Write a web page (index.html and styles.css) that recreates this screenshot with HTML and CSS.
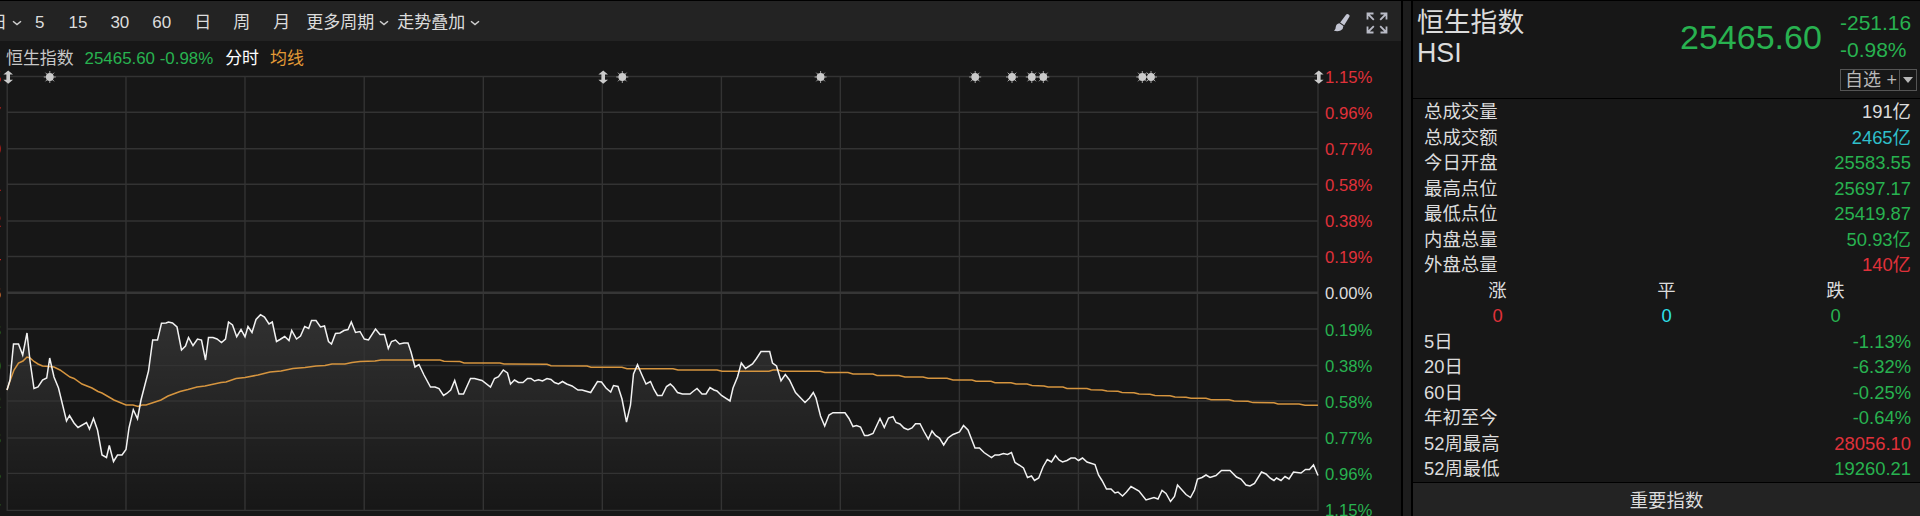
FILE: index.html
```html
<!doctype html>
<html lang="zh-CN">
<head>
  <meta charset="utf-8">
  <title>恒生指数 HSI</title>
  <link rel="stylesheet" href="styles.css">
</head>
<body>

<div class="app">

  <div class="main">
    <div class="toolbar">
      <span class="tab tab-cut">日</span>
      <svg class="chevron c1" viewBox="0 0 10 6"><path d="M1 1.2L5 4.6L9 1.2"/></svg>
      <span class="tab t5">5</span>
      <span class="tab t15">15</span>
      <span class="tab t30">30</span>
      <span class="tab t60">60</span>
      <span class="tab day">日</span>
      <span class="tab week">周</span>
      <span class="tab month">月</span>
      <span class="tab more">更多周期</span>
      <svg class="chevron c2" viewBox="0 0 10 6"><path d="M1 1.2L5 4.6L9 1.2"/></svg>
      <span class="tab overlay">走势叠加</span>
      <svg class="chevron c3" viewBox="0 0 10 6"><path d="M1 1.2L5 4.6L9 1.2"/></svg>
      <div class="tools">
        <svg class="brush" viewBox="0 0 18 20">
          <path d="M13.2 1.6Q14 .6 15.2 1.2L16.2 2Q17 2.8 16.4 3.8L11.2 12.2L7.2 9.4Z"/>
          <path d="M6.4 10.2L10.4 13.1Q10.4 16.2 7.6 17.6Q4.6 18.8 1 17.8Q2.8 16.6 2.7 14.2Q3 10.6 6.4 10.2Z"/>
        </svg>
        <svg class="expand" viewBox="0 0 22 22">
          <path d="M1.5 7.5V1.5H7.5M1.5 1.5L7.8 7.8M14.5 1.5H20.5V7.5M20.5 1.5L14.2 7.8M1.5 14.5V20.5H7.5M1.5 20.5L7.8 14.2M14.5 20.5H20.5V14.5M20.5 20.5L14.2 14.2"/>
        </svg>
      </div>
    </div>

    <div class="legend">
      <span class="legend-name">恒生指数</span>
      <span class="legend-price green">25465.60 -0.98%</span>
      <span class="legend-time">分时</span>
      <span class="legend-avg">均线</span>
    </div>

    <div class="chart">
      <div class="axis axis-price">
        <span class="red">26013.65</span>
        <span class="red">25964.17</span>
        <span class="red">25914.69</span>
        <span class="red">25865.21</span>
        <span class="red">25815.72</span>
        <span class="red">25766.24</span>
        <span>25716.76</span>
        <span class="green">25667.28</span>
        <span class="green">25617.80</span>
        <span class="green">25568.32</span>
        <span class="green">25518.83</span>
        <span class="green">25469.35</span>
        <span class="green">25419.87</span>
      </div>

      <svg class="plot" viewBox="1 69 1323 447">
        <defs>
          <linearGradient id="fade" gradientUnits="userSpaceOnUse" x1="0" y1="310" x2="0" y2="510">
            <stop offset="0" stop-color="#fff" stop-opacity=".115"/>
            <stop offset="1" stop-color="#fff" stop-opacity="0"/>
          </linearGradient>
          <g id="sun">
            <circle r="3.9"/>
            <path d="M0-6V6M-6 0H6M-4.3-4.3L4.3 4.3M-4.3 4.3L4.3-4.3"/>
          </g>
          <path id="updown" d="M0-6.6L4.8-2.6H1.8V2.6H4.8L0 6.6L-4.8 2.6H-1.8V-2.6H-4.8Z"/>
        </defs>

        <path class="area" id="area"/>
        <path class="grid" d="M7 76.5H1318M7 112.3H1318M7 148.8H1318M7 184.3H1318M7 221H1318M7 256.5H1318M7 329H1318M7 365.5H1318M7 401H1318M7 438H1318M7 473.4H1318M7 510.4H1318"/>
        <path class="grid" d="M7.2 76V511M126 76V511M245 76V511M364.2 76V511M483.3 76V511M602.3 76V511M721.4 76V511M840.3 76V511M959.4 76V511M1078.4 76V511M1197.4 76V511M1318 76V511"/>
        <path class="zero" d="M7 292.8H1318"/>
        <polyline class="avg" id="avg"/>
        <polyline class="price" id="price"/>

        <g class="marks">
          <use href="#updown" x="8.2" y="77.2"/>
          <use href="#updown" x="603.2" y="77.2"/>
          <use href="#updown" x="1318.8" y="77.2"/>
          <use href="#sun" x="49.8" y="77"/>
          <use href="#sun" x="622.3" y="77"/>
          <use href="#sun" x="820.6" y="77"/>
          <use href="#sun" x="975.2" y="77"/>
          <use href="#sun" x="1012" y="77"/>
          <use href="#sun" x="1031.8" y="77"/>
          <use href="#sun" x="1043.3" y="77"/>
          <use href="#sun" x="1142.3" y="77"/>
          <use href="#sun" x="1151" y="77"/>
        </g>
      </svg>

      <div class="axis axis-percent">
        <span class="red">1.15%</span>
        <span class="red">0.96%</span>
        <span class="red">0.77%</span>
        <span class="red">0.58%</span>
        <span class="red">0.38%</span>
        <span class="red">0.19%</span>
        <span>0.00%</span>
        <span class="green">0.19%</span>
        <span class="green">0.38%</span>
        <span class="green">0.58%</span>
        <span class="green">0.77%</span>
        <span class="green">0.96%</span>
        <span class="green">1.15%</span>
      </div>
    </div>
  </div>

  <div class="gutter"></div>

  <div class="side">
    <div class="quote">
      <div class="quote-name">
        <div>恒生指数</div>
        <div>HSI</div>
      </div>
      <div class="quote-price green">25465.60</div>
      <div class="quote-right">
        <div class="quote-change green">-251.16</div>
        <div class="quote-change green">-0.98%</div>
        <div class="watch">
          <span class="watch-label">自选 <i>+</i></span>
          <span class="watch-arrow"><svg viewBox="0 0 10 6"><path d="M0 0H10L5 6Z"/></svg></span>
        </div>
      </div>
    </div>

    <div class="stats">
      <div class="row"><span>总成交量</span><span>191亿</span></div>
      <div class="row"><span>总成交额</span><span class="teal">2465亿</span></div>
      <div class="row"><span>今日开盘</span><span class="green">25583.55</span></div>
      <div class="row"><span>最高点位</span><span class="green">25697.17</span></div>
      <div class="row"><span>最低点位</span><span class="green">25419.87</span></div>
      <div class="row"><span>内盘总量</span><span class="green">50.93亿</span></div>
      <div class="row"><span>外盘总量</span><span class="red">140亿</span></div>
      <div class="breadth">
        <span>涨</span><span>平</span><span>跌</span>
        <span class="red">0</span><span class="cyan">0</span><span class="green">0</span>
      </div>
      <div class="row"><span>5日</span><span class="green">-1.13%</span></div>
      <div class="row"><span>20日</span><span class="green">-6.32%</span></div>
      <div class="row"><span>60日</span><span class="green">-0.25%</span></div>
      <div class="row"><span>年初至今</span><span class="green">-0.64%</span></div>
      <div class="row"><span>52周最高</span><span class="red">28056.10</span></div>
      <div class="row"><span>52周最低</span><span class="green">19260.21</span></div>
    </div>

    <div class="side-footer">重要指数</div>
  </div>

</div>

<script>
var price = '7,390 10,380 13.5,344 18.5,344 22.7,355 27,333 30,361 34,388.5 38,387 42.5,380 46.7,378 49.7,358 54,377 58.5,388 66.5,421 69.5,415.5 74,423 78,427.5 86.5,422.5 89.5,429 93.5,418.5 97.5,430 102,455 106.5,457.5 109.3,445.5 113.5,461.5 117.5,455 122,455 126,449.5 129,428 133.3,409.7 137.5,418.7 141,400 148.5,371 152.7,340 157.5,340 161.5,323.3 166,323 168.5,322 172.5,323 177,327 181.5,350 185.5,346 188.5,337.5 193,345.5 197.5,339 201.5,340 205.5,360 208.5,337.5 213,337.5 217,339 221.5,342.5 225.5,339 228.5,322 232.5,325 236.7,336.7 241,329.5 245,336.7 248,326.5 252,332.5 256,319.5 260.5,314.7 264.5,317 269,324 272.3,322 ' +
  '276.5,341.5 280,339.5 284.7,336.5 289,340.5 291.7,330.5 296.5,339 300.5,336 304.7,326.5 308.7,328.5 311.5,320.5 316,320.5 320.5,327 324.5,326 328.5,341.5 331.5,344 335.5,333.5 340,333 344,330.5 348,329.5 351.3,322 355.5,332.5 360,331.5 364.3,339 368.5,340 375.5,329 380,334.5 384.5,334.5 388.3,348.5 391.5,341.5 395.5,340 399.5,344 404,343 408,343 411,352 415,367 419,364.5 424,375 430.5,387 435,387 439,388.5 443.5,395.5 446.7,393.5 450.7,390 454.7,380.5 459,394 463.5,394 470.5,378.5 474.5,378.5 482,380.5 490.5,387 494.5,378.5 498.5,376.7 503.3,370 507.5,373 510.5,384 514.5,380 518.5,382.5 523,382.5 527.5,378.5 531,378.5 534.5,381 538.5,379.7 542.5,381 ' +
  '547,378.5 551,379.5 554.5,382.5 558.5,384 562.5,381.5 566.7,384 572,386 578,390 582,390 590.7,392.5 597.5,381.5 601.5,382 606,388 610.7,392 613.5,385.5 618,386.5 622,399 626.5,422 630.5,405 633.5,374 637.5,364.7 641.5,374 646,384 650.5,381.5 654,389.5 657.5,395.5 662,395.5 666.5,386.5 670.3,384 673.5,387 677.5,392.5 682.5,394 690,394 693,391.5 697,388.5 702,394 706,394 710,387.5 714,390 717,391 721.5,395.5 730,401 733,388 737.5,377 741.3,363 745.5,368.5 752.5,364 756.5,358.5 761,351.5 769.7,351.5 772.5,363 776.5,366 781,380.7 785.3,374.5 789.5,380 795.5,392.5 805,402.5 809.5,398 813.3,392.5 ' +
  '816,398 820.5,416 824.7,426 829,415 833,412.7 845,412.7 849,418.5 853,426.5 856.5,425.5 860.5,427 864.5,435.5 868,435.5 873,433.5 880,418.5 884.3,427.5 888.5,418 893,416.7 896,422.5 900,424 904,428 908,429.7 912,428 915.5,423.7 920,423.7 924,431.5 928.3,439 932,431 935.5,435.5 939.5,438 943.7,445 948,438 953,434.5 959.5,432 963.5,425.5 968,430 975,448 979.5,448 984,452.5 991.5,457.5 995,455 999,455 1003.5,453.5 1007.5,454.5 1011.5,452.5 1015,462.5 1019,465 1023.5,468 1027.5,477.5 1031.5,476 1034.5,480.5 1038.7,478 1043,467 1047.3,459.5 1051.5,462 1055.5,455.5 1059,460 1062.5,462 1067,460.5 1071,458 1075,458 1078.5,460.5 1082.5,458 ' +
  '1087,462 1095,464.5 1098.5,475 1102,480.5 1106.5,489 1111,489 1115,493 1118,492 1122.5,496 1126.5,492 1131,486.5 1139,491 1146,500 1154,497.5 1158,499 1162,490.5 1166,493.5 1170.5,501.5 1174.5,496.5 1177.5,485 1182,490 1186,494.5 1190.5,497.5 1194.5,490 1197.5,479 1202,477.5 1206,475 1210,477.5 1216,475.5 1221.5,470.5 1230,470.5 1236.5,477 1241,479 1246,485 1250,486 1254.5,483.5 1261.5,472 1266,474 1270,478 1274,480.5 1276.5,478 1281,480.5 1285,476.5 1289,479 1293.5,472 1301,473 1305.5,469.5 1309.5,469.5 1313.5,465 1318,475.5';

var avg = '7,390 10,381 14,370 18.5,363 23,361 27,357 30,358 34,361.5 38,364 42.5,366 49,366.5 54,367 60,370 70,377 74,378.5 82,384 92,388 98,391.5 102,393 114,400 126,405 133,405 138,406.5 142,405 146,405 152,403 161,400 168,396 180,391.5 188,389.5 197,387 205,386 221,382.5 226,382 236,378.5 245,377.5 258,375 270,372 281,371 293,368.5 305,367.5 316,366 325,365.5 332,364 345,364 352,362.5 360,361.5 375,361 381,360 440,360 444,361.3 460,361.5 464,363 500,363 504,364 547,364.3 551,365.7 587,366 591,367.3 622,367.3 627,368.7 673,368.7 678,370 717,370 722,371.3 769,371.3 773,370 778,370 782,371.3 820,371.3 ' +
  '825,372.5 848,372.5 853,374 873,374 877,375.5 899,375.5 905,377 923,377 928,378.3 947,378.3 953,380 972,380 976,381.3 991,381.3 995,382.7 1011,382.7 1016,384 1027,384 1032,385.5 1044,386 1048,387 1063,387 1067,388.5 1087,388.5 1091,389.7 1102,390 1107,391 1118,391.3 1122,392.5 1134,392.7 1139,394 1150,394.3 1155,395.5 1170,395.7 1175,397 1186,397.3 1191,398.3 1206,398.3 1211,399.7 1229,399.7 1234,401 1248,401.2 1253,402.6 1274,402.7 1278,404 1299,404 1305,405.3 1318,405.3';

document.getElementById('price').setAttribute('points', price);
document.getElementById('avg').setAttribute('points', avg);
// close the price line down to the bottom of the grid
document.getElementById('area').setAttribute('d', 'M7,510 L' + price + ' L1318,510 Z');
</script>

</body>
</html>
```

FILE: styles.css
```css
* {
  box-sizing: border-box;
}

body {
  margin: 0;
  background: #000;
  color: #dcdcdc;
  font-family: "Liberation Sans", "Noto Sans CJK SC", sans-serif;
  overflow: hidden;
}

.app {
  display: flex;
  width: 1920px;
  height: 516px;
  padding-top: 1px;
  overflow: hidden;
}

.green { color: #28b250; }
.red { color: #e0313a; }
.cyan { color: #2ee0ea; }
.teal { color: #2fbfca; }

/* left: toolbar + chart */

.main {
  width: 1401px;
  background: #171717;
  overflow: hidden;
}

.toolbar {
  display: flex;
  align-items: center;
  height: 40px;
  background: #232323;
  font-size: 17px;
  line-height: 38px;
  white-space: nowrap;
}

.chevron {
  width: 10px;
  height: 6px;
  flex: none;
  margin-top: 4px;
  fill: none;
  stroke: #cfcfcf;
  stroke-width: 1.5;
}

.tab { flex: none; margin-top: 4px; }
.tab-cut { margin-left: -10px; }
.c1 { margin-left: 5px; }
.t5 { margin-left: 13px; }
.t15 { margin-left: 24px; }
.t30 { margin-left: 23px; }
.t60 { margin-left: 23px; }
.day { margin-left: 23px; }
.week { margin-left: 22px; }
.month { margin-left: 23px; }
.more { margin-left: 16px; }
.c2 { margin-left: 5px; }
.overlay { margin-left: 8px; }
.c3 { margin-left: 5px; }

.tools {
  display: flex;
  align-items: center;
  gap: 15px;
  margin-left: auto;
  padding: 4px 13px 0 0;
}

.brush {
  width: 18px;
  height: 20px;
  fill: #c3c5d2;
}

.expand {
  width: 22px;
  height: 22px;
  fill: none;
  stroke: #b9bbc6;
  stroke-width: 1.8;
}

.legend {
  display: flex;
  height: 28px;
  padding-left: 6px;
  font-size: 16.9px;
  line-height: 35px;
  white-space: nowrap;
}

.legend-name { color: #c8c8c8; }
.legend-price { margin-left: 11px; }
.legend-time { margin-left: 12px; color: #fff; }
.legend-avg { margin-left: 11px; color: #e39a36; }

.chart {
  display: flex;
  height: 447px;
}

.axis {
  display: flex;
  flex-direction: column;
  justify-content: space-between;
  height: 450px;
  font-size: 16.7px;
  line-height: 17px;
}

.axis-price {
  width: 1px;
  align-items: flex-end;
  overflow: hidden;
}

.plot {
  flex: none;
  width: 1323px;
  height: 447px;
}

.axis-percent {
  padding-left: 1px;
}

.area { fill: url(#fade); }
.grid { fill: none; stroke: #333; stroke-width: 1.4; }
.zero { stroke: #363636; stroke-width: 2.4; }
.price { fill: none; stroke: #f2f2f2; stroke-width: 1.5; }
.avg { fill: none; stroke: #d6953f; stroke-width: 1.5; }

.marks {
  fill: #cacaca;
  stroke: #cacaca;
  stroke-width: .8;
}

#sun circle,
#updown {
  stroke: none;
}

.gutter {
  width: 12px;
  background: #1d1d1d;
  border: solid #000;
  border-width: 0 2px;
}

/* right: quote panel */

.side {
  width: 507px;
  background: #171717;
}

.quote {
  display: flex;
  height: 98px;
  border-bottom: 1px solid #000;
}

.quote-name {
  width: 267px;
  padding: 7px 0 0 4px;
  font-size: 26.8px;
  line-height: 30px;
}

.quote-price {
  width: 160px;
  padding-top: 16px;
  font-size: 34px;
  line-height: 40px;
}

.quote-right {
  width: 77px;
  padding-top: 8px;
}

.quote-change {
  font-size: 21px;
  line-height: 27px;
}

.watch {
  display: flex;
  height: 22px;
  margin-top: 6px;
  border: 1px solid #555;
  color: #b8b8b8;
  font-size: 18px;
  line-height: 20px;
  white-space: nowrap;
}

.watch-label {
  display: flex;
  align-items: center;
  justify-content: space-between;
  flex: 1;
  padding: 0 2px 0 4px;
}

.watch-label i {
  font-style: normal;
}

.watch-arrow {
  display: flex;
  align-items: center;
  justify-content: center;
  width: 17px;
  border-left: 1px solid #555;
}

.watch-arrow svg {
  width: 10px;
  height: 6px;
  fill: #b8b8b8;
}

.stats {
  height: 384px;
  border-bottom: 1px solid #000;
  font-size: 18.4px;
  line-height: 26px;
}

.row {
  display: flex;
  justify-content: space-between;
  height: 25.5px;
  padding: 0 9px 0 11px;
}

.breadth {
  display: grid;
  grid-template-columns: repeat(3, 1fr);
  grid-auto-rows: 25.5px;
  text-align: center;
}

.side-footer {
  height: 33px;
  background: #232323;
  font-size: 18.4px;
  line-height: 36px;
  text-align: center;
}
```
